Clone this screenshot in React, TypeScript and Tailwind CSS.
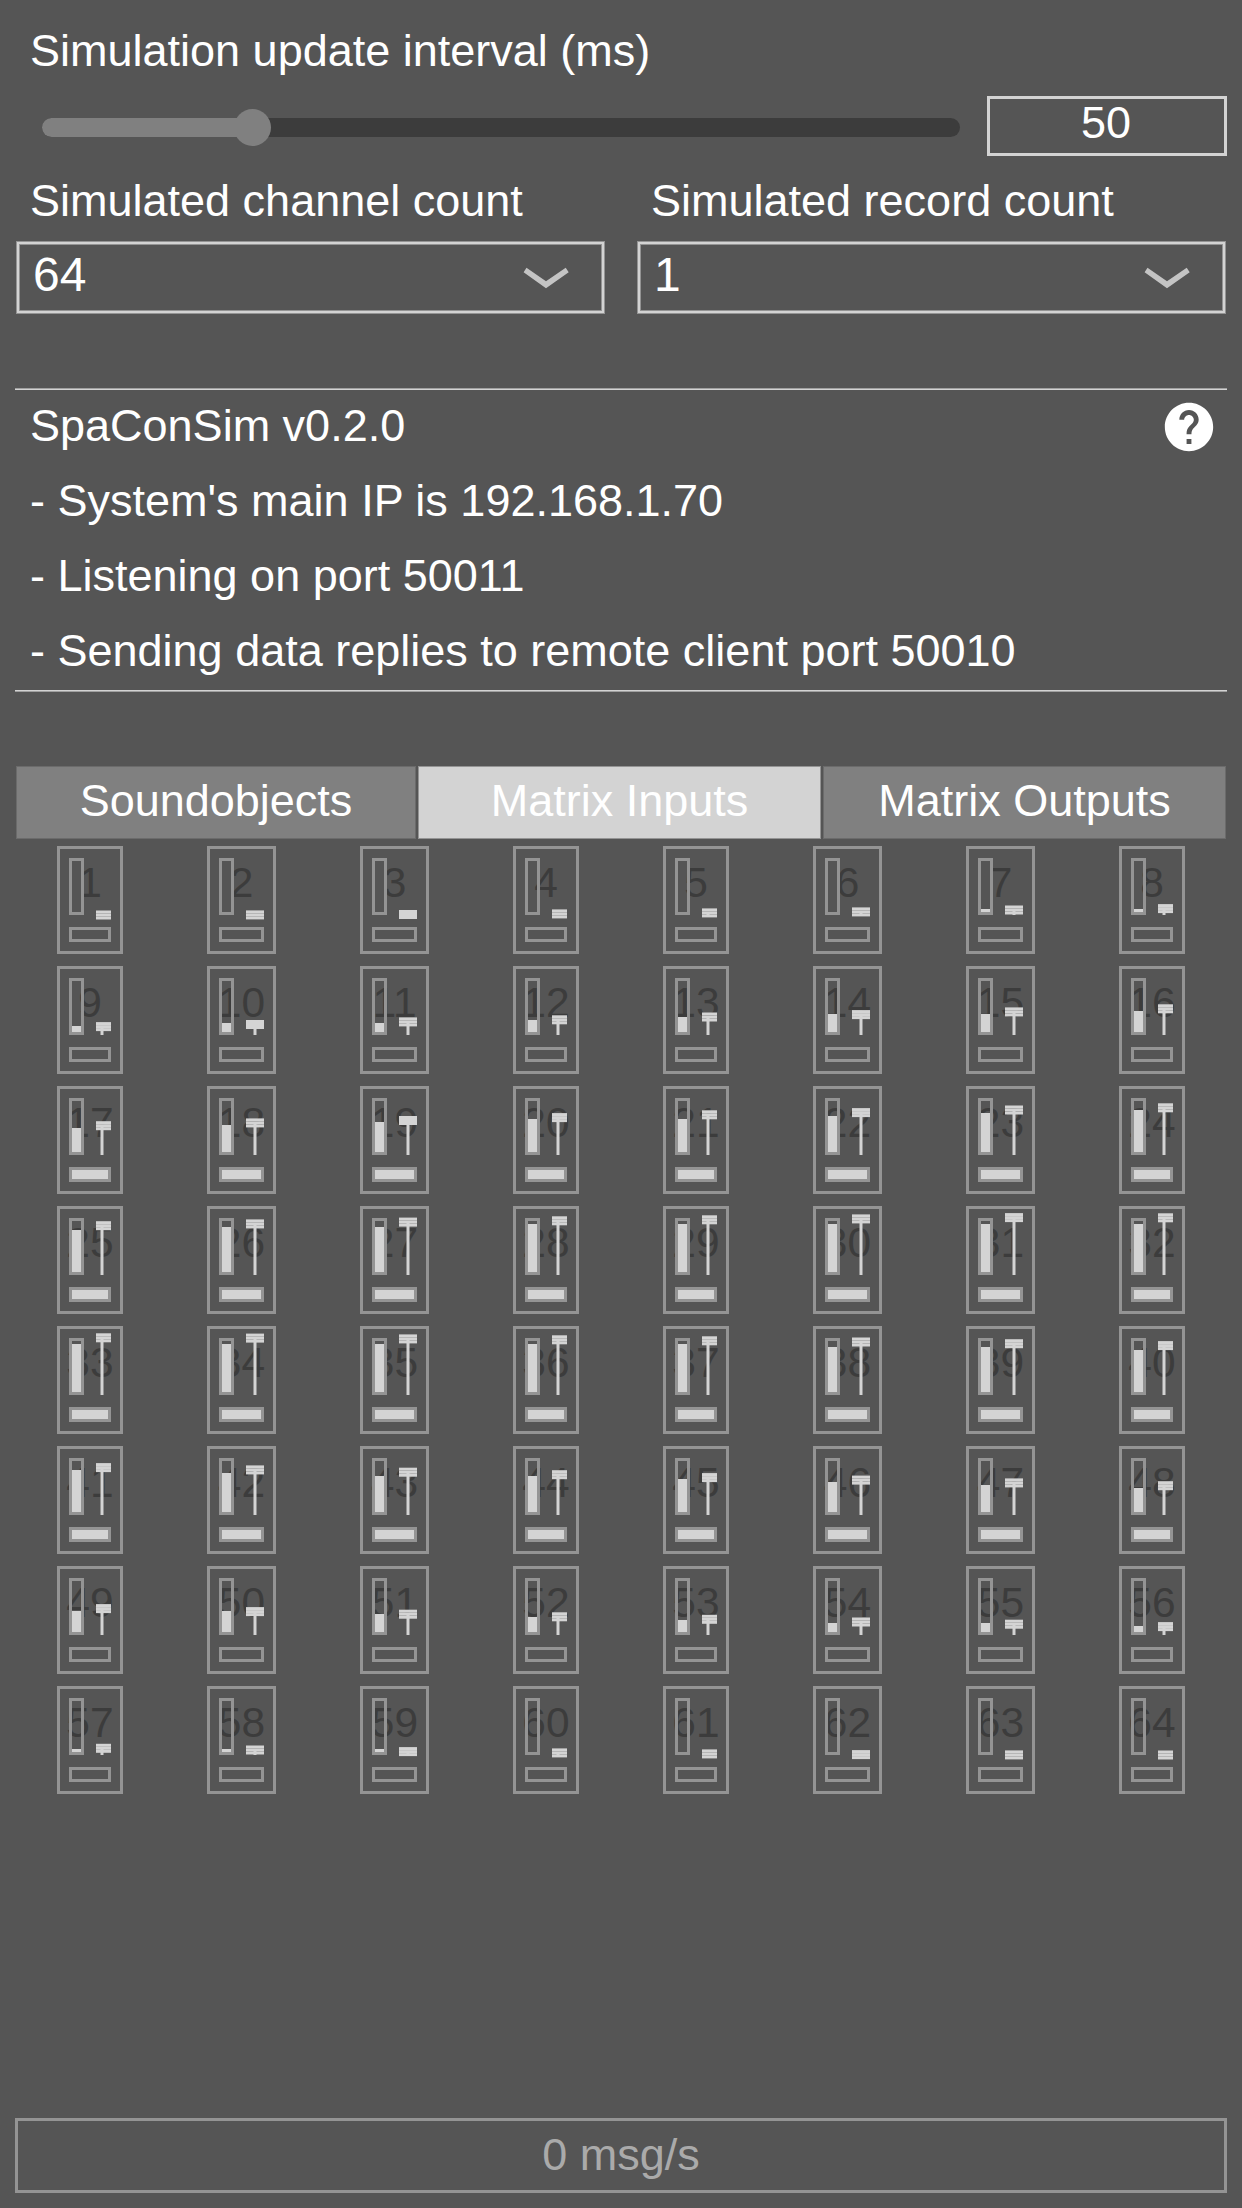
import { MdHelp } from "react-icons/md";

type Channel = { fader: number; level: number };

// Fader cap offset from the top of the channel strip, in pixels.
const FADERS = [
  64.5, 64.4, 64, 63.4, 62.4, 61.4, 59.5, 58.1, 56.1, 54, 51.4, 49.3, 46.5, 44.1, 41.4, 38.3,
  35.2, 32.4, 30, 27.1, 24.3, 22.1, 19.5, 17.3, 15.2, 13.4, 11.6, 10.3, 9.3, 8.4, 7.1, 7.3,
  7.3, 7.6, 8.4, 9.3, 10.3, 11.5, 13.2, 15.1, 17.1, 19.4, 21.7, 24.2, 27.1, 29.6, 32.4, 35.2,
  38.1, 41.1, 43.7, 46.3, 48.8, 51.5, 53.7, 56.1, 57.8, 59.5, 61.1, 62.4, 63.4, 64.1, 64.4, 64.5,
];

// Height of the lit part of the level meter, in pixels.
const LEVELS = [
  0, 0, 0, 0, 0, 0, 3, 3, 6, 9, 9, 12, 15, 18, 18, 21,
  24, 27, 30, 33, 33, 36, 39, 42, 42, 45, 45, 48, 48, 48, 48, 48,
  48, 48, 48, 48, 48, 45, 45, 42, 42, 39, 36, 36, 33, 30, 27, 24,
  21, 21, 18, 15, 12, 9, 9, 6, 3, 3, 3, 0, 0, 0, 0, 0,
];

const CHANNELS: Channel[] = FADERS.map((fader, i) => ({ fader, level: LEVELS[i] }));

const WIDE_COLUMNS = [1, 2, 5, 6];

function ChannelStrip({ index, channel }: { index: number; channel: Channel }) {
  const wide = WIDE_COLUMNS.includes(index % 8);
  const muted = index >= 16 && index < 48;
  const capWidth = wide ? 18 : 15;
  const stemX = wide ? 7.5 : 4.5;
  const y = channel.fader;
  return (
    <div
      className={`relative flex h-[108px] flex-col border-[3px] border-[#949494] px-[9px] pt-[9px] ${
        wide ? "w-[69px]" : "w-[66px]"
      }`}
    >
      <span className="absolute inset-x-[-3px] top-[9px] text-center text-[42.5px] leading-[50px] text-[#3c3c3c]">
        {index + 1}
      </span>
      <div className="relative flex h-[57px] w-[15px] items-end border-[3px] border-[#949494]">
        <div className="w-full bg-[#d4d4d4]" style={{ height: channel.level }} />
      </div>
      <svg className="absolute left-[36px] top-[-3px]" width={capWidth} height="80" viewBox={`0 0 ${capWidth} 80`}>
        {y + 4 < 69 && <rect x={stemX} y={y + 5} width="3" height={Math.max(0, 64 - y)} fill="#d4d4d4" />}
        {[0, 3, 6].map((dy) => (
          <rect key={dy} x="0" y={y + dy} width={capWidth} height="3" fill="#d4d4d4" />
        ))}
      </svg>
      <div
        className={`relative mt-[12px] h-[15px] w-full border-[3px] border-[#949494] ${muted ? "bg-[#d4d4d4]" : ""}`}
      />
    </div>
  );
}

function Select({ label, value }: { label: string; value: string }) {
  return (
    <div className="w-[589px]">
      <div className="h-[71px] pl-[14px] pt-px leading-[60px]">{label}</div>
      <div className="p-px">
        <div className="flex h-[71px] items-center justify-between border-2 border-[#d3d3d3] pl-[14px] pr-[33px] text-[48px] leading-[60px] shadow-[0_0_0_1px_#949494,inset_0_0_0_1px_#949494]">
          <span className="-mt-[5px]">{value}</span>
          <svg width="46" height="22" viewBox="523 267 46 22">
            <polygon fill="#c4c4c4" points="523.6,272.3 526.5,267.7 546,281.3 565.7,267.7 568.7,272.3 546,288.3" />
          </svg>
        </div>
      </div>
    </div>
  );
}

const TAB = "flex h-[73px] justify-center border pt-[4px] leading-[60px]";

export default function App() {
  return (
    <main
      className="flex h-[2208px] w-[1242px] flex-col overflow-hidden whitespace-nowrap bg-[#555555] px-[15px] pb-[15px] text-[45px] text-white"
      style={{ fontFamily: '"Liberation Sans", Arial, sans-serif' }}
    >
      <div className="h-[96px] pl-[15px] pt-[21px] leading-[60px]">Simulation update interval (ms)</div>

      <div className="flex h-[60px] items-center justify-between pl-[27px]">
        <div className="relative mt-[3px] h-[19px] w-[918px] rounded-full bg-[#3c3c3c]">
          <div className="h-full w-[210px] rounded-l-full bg-[#808080]" />
          <div className="absolute left-[192px] top-[-9px] size-[37px] rounded-full bg-[#808080]" />
        </div>
        <div className="h-[60px] w-[240px] border-[3px] border-[#d3d3d3] pr-[2px] text-center leading-[48px]">50</div>
      </div>

      <div className="mt-[14px] flex justify-between px-px">
        <Select label="Simulated channel count" value="64" />
        <Select label="Simulated record count" value="1" />
      </div>

      <section className="mt-[74px] flex h-[304px] justify-between border-y border-[#a0a0a0] shadow-[inset_0_1px_0_#d3d3d3,inset_0_-1px_0_#d3d3d3]">
        <div className="-mt-px pl-[15px] leading-[75px]">
          <div>SpaConSim v0.2.0</div>
          <div>- System's main IP is 192.168.1.70</div>
          <div>- Listening on port 50011</div>
          <div>- Sending data replies to remote client port 50010</div>
        </div>
        <MdHelp className="mr-[9px] mt-[9px] size-[58px]" />
      </section>

      <nav className="mt-[74px] flex justify-between px-px">
        <div className={`${TAB} w-[400px] border-[#6b6b6b] bg-[#808080]`}>Soundobjects</div>
        <div className={`${TAB} w-[403px] border-[#949494] bg-[#d3d3d3]`}>Matrix Inputs</div>
        <div className={`${TAB} w-[403px] border-[#6b6b6b] bg-[#808080]`}>Matrix Outputs</div>
      </nav>

      <div className="ml-[42px] mt-[7px] grid grid-cols-[150px_153px_153px_150px_150px_153px_153px_66px] gap-y-[12px]">
        {CHANNELS.map((channel, i) => (
          <ChannelStrip key={i} index={i} channel={channel} />
        ))}
      </div>

      <div className="mt-auto h-[75px] border-[3px] border-[#949494] text-center leading-[68px] text-[#aaaaaa]">
        0 msg/s
      </div>
    </main>
  );
}
